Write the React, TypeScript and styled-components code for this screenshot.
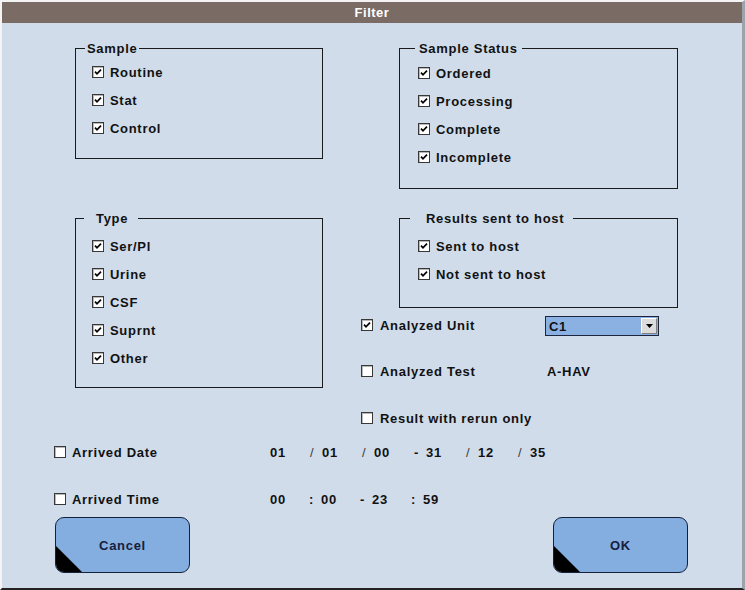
import styled, { createGlobalStyle } from "styled-components";

const GlobalStyle = createGlobalStyle`
  html, body {
    margin: 0;
    padding: 0;
    background: #d0dcea;
  }
`;

const sampleItems = ["Routine", "Stat", "Control"];
const statusItems = ["Ordered", "Processing", "Complete", "Incomplete"];
const typeItems = ["Ser/Pl", "Urine", "CSF", "Suprnt", "Other"];
const hostItems = ["Sent to host", "Not sent to host"];

const dateParts = ["01", "/", "01", "/", "00", "-", "31", "/", "12", "/", "35"];
const timeParts = ["00", ":", "00", "-", "23", ":", "59"];

const Window = styled.div`
  width: 745px;
  height: 590px;
  box-sizing: border-box;
  background: #d0dcea;
  border-top: 2px solid #f4f4f4;
  border-left: 2px solid #f4f4f4;
  border-right: 3px solid #9ea3ab;
  border-bottom: 2px solid #222;
  display: flex;
  flex-direction: column;
  font-family: "Liberation Sans", Arial, sans-serif;
  font-size: 13px;
  font-weight: bold;
  letter-spacing: 0.7px;
  color: #111;
`;

const TitleBar = styled.div`
  height: 21px;
  flex: none;
  background: #7b6b65;
  color: #fff;
  display: flex;
  align-items: center;
  justify-content: center;
  letter-spacing: 0.5px;
`;

const Body = styled.div`
  flex: 1;
  display: flex;
  flex-direction: column;
  padding-top: 25px;
`;

const Top = styled.div`
  display: flex;
  align-items: flex-start;
`;

const LeftCol = styled.div`
  margin-left: 73px;
  width: 248px;
  display: flex;
  flex-direction: column;
  gap: 59px;
`;

const RightCol = styled.div`
  margin-left: 38px;
  display: flex;
  flex-direction: column;
`;

const GroupStack = styled.div`
  margin-left: 38px;
  width: 279px;
  display: flex;
  flex-direction: column;
  gap: 29px;
`;

const Group = styled.div<{ $h: number; $inset: number; $top: number }>`
  position: relative;
  box-sizing: border-box;
  height: ${(p) => p.$h}px;
  border: 1px solid #1a1a1a;
  padding: ${(p) => p.$top}px 0 0 ${(p) => p.$inset}px;
  display: flex;
  flex-direction: column;
`;

const Legend = styled.span<{ $left: number; $pad: string }>`
  position: absolute;
  top: -8px;
  left: ${(p) => p.$left}px;
  line-height: 15px;
  padding: ${(p) => p.$pad};
  background: #d0dcea;
  white-space: nowrap;
`;

const Item = styled.div`
  height: 28px;
  display: flex;
  align-items: center;
  gap: 6px;
`;

const Box = styled.span`
  width: 12px;
  height: 12px;
  box-sizing: border-box;
  flex: none;
  border: 1px solid #383838;
  background: #fff;
  box-shadow: inset 1px 1px 0 #b8b8b8;
  display: inline-flex;
  align-items: center;
  justify-content: center;
`;

const Options = styled.div`
  margin-top: 6px;
  display: flex;
  flex-direction: column;
  gap: 27px;
`;

const OptionRow = styled.div`
  height: 20px;
  display: grid;
  grid-template-columns: 184px auto;
  align-items: center;
`;

const Label = styled.div<{ $gap: number }>`
  display: flex;
  align-items: center;
  gap: ${(p) => p.$gap}px;
  white-space: nowrap;
`;

const Value = styled.span`
  padding-left: 2px;
`;

const Select = styled.div`
  width: 114px;
  height: 20px;
  box-sizing: border-box;
  border: 1px solid #1b2540;
  background: #8bb1e2;
  display: flex;
  align-items: center;
  justify-content: space-between;
  padding: 0 1px 0 3px;
  margin-top: 2px;
`;

const ArrowButton = styled.span`
  width: 16px;
  height: 16px;
  box-sizing: border-box;
  background: #dcdcdc;
  border-top: 1px solid #fff;
  border-left: 1px solid #fff;
  border-right: 1px solid #808080;
  border-bottom: 1px solid #808080;
  display: flex;
  align-items: center;
  justify-content: center;
`;

const Bottom = styled.div`
  margin-top: 14px;
  margin-left: 52px;
  display: flex;
  flex-direction: column;
  gap: 27px;
`;

const RangeRow = styled.div`
  height: 20px;
  display: grid;
  grid-template-columns: 216px auto;
  align-items: center;
`;

const Range = styled.div`
  display: flex;
  align-items: center;
`;

const Part = styled.span<{ $w: number; $thin?: boolean }>`
  width: ${(p) => p.$w}px;
  flex: none;
  font-weight: ${(p) => (p.$thin ? "normal" : "bold")};
  color: ${(p) => (p.$thin ? "#3a3a3a" : "#111")};
`;

const ButtonRow = styled.div`
  margin-top: 8px;
  padding: 0 54px 0 53px;
  display: flex;
  justify-content: space-between;
`;

const Button = styled.button`
  position: relative;
  overflow: hidden;
  width: 135px;
  height: 56px;
  box-sizing: border-box;
  border: 1px solid #15203a;
  border-radius: 9px;
  background: #84ade0;
  color: #17203a;
  font: inherit;
  letter-spacing: 0.7px;
  padding: 0;
  cursor: pointer;

  &::before {
    content: "";
    position: absolute;
    left: 0;
    bottom: 0;
    width: 26px;
    height: 26px;
    background: #000;
    clip-path: polygon(0 0, 0 100%, 100% 100%);
  }
`;

const Check = ({ on }: { on?: boolean }) => (
  <Box>
    {on && (
      <svg width="8" height="8" viewBox="0 0 8 8">
        <path d="M1 3.6 L3 5.8 L7 1.6" fill="none" stroke="#000" strokeWidth="1.7" />
      </svg>
    )}
  </Box>
);

const CheckGroup = ({
  title,
  items,
  h,
  inset,
  top,
  left,
  pad,
}: {
  title: string;
  items: string[];
  h: number;
  inset: number;
  top: number;
  left: number;
  pad: string;
}) => (
  <Group $h={h} $inset={inset} $top={top}>
    <Legend $left={left} $pad={pad}>
      {title}
    </Legend>
    {items.map((it) => (
      <Item key={it}>
        <Check on />
        {it}
      </Item>
    ))}
  </Group>
);

const RangeParts = ({ parts, w }: { parts: string[]; w: number }) => (
  <Range>
    {parts.map((p, i) => (
      <Part key={i} $w={i % 2 === 0 ? w : 12} $thin={p === "/"}>
        {p}
      </Part>
    ))}
  </Range>
);

export default function App() {
  return (
    <>
      <GlobalStyle />
      <Window>
        <TitleBar>Filter</TitleBar>
        <Body>
          <Top>
            <LeftCol>
              <CheckGroup title="Sample" items={sampleItems} h={111} inset={16} top={9} left={9} pad="0 2px" />
              <CheckGroup title="Type" items={typeItems} h={170} inset={16} top={13} left={8} pad="0 10px 0 12px" />
            </LeftCol>
            <RightCol>
              <GroupStack>
                <CheckGroup title="Sample Status" items={statusItems} h={141} inset={18} top={10} left={15} pad="0 4px" />
                <CheckGroup title="Results sent to host" items={hostItems} h={90} inset={18} top={13} left={10} pad="0 9px 0 16px" />
              </GroupStack>
              <Options>
                <OptionRow>
                  <Label $gap={7}>
                    <Check on />
                    Analyzed Unit
                  </Label>
                  <Select>
                    C1
                    <ArrowButton>
                      <svg width="7" height="4" viewBox="0 0 7 4">
                        <path d="M0 0 H7 L3.5 4 Z" fill="#000" />
                      </svg>
                    </ArrowButton>
                  </Select>
                </OptionRow>
                <OptionRow>
                  <Label $gap={7}>
                    <Check />
                    Analyzed Test
                  </Label>
                  <Value>A-HAV</Value>
                </OptionRow>
                <OptionRow>
                  <Label $gap={7}>
                    <Check />
                    Result with rerun only
                  </Label>
                </OptionRow>
              </Options>
            </RightCol>
          </Top>
          <Bottom>
            <RangeRow>
              <Label $gap={6}>
                <Check />
                Arrived Date
              </Label>
              <RangeParts parts={dateParts} w={40} />
            </RangeRow>
            <RangeRow>
              <Label $gap={6}>
                <Check />
                Arrived Time
              </Label>
              <RangeParts parts={timeParts} w={39} />
            </RangeRow>
          </Bottom>
          <ButtonRow>
            <Button>Cancel</Button>
            <Button>OK</Button>
          </ButtonRow>
        </Body>
      </Window>
    </>
  );
}
